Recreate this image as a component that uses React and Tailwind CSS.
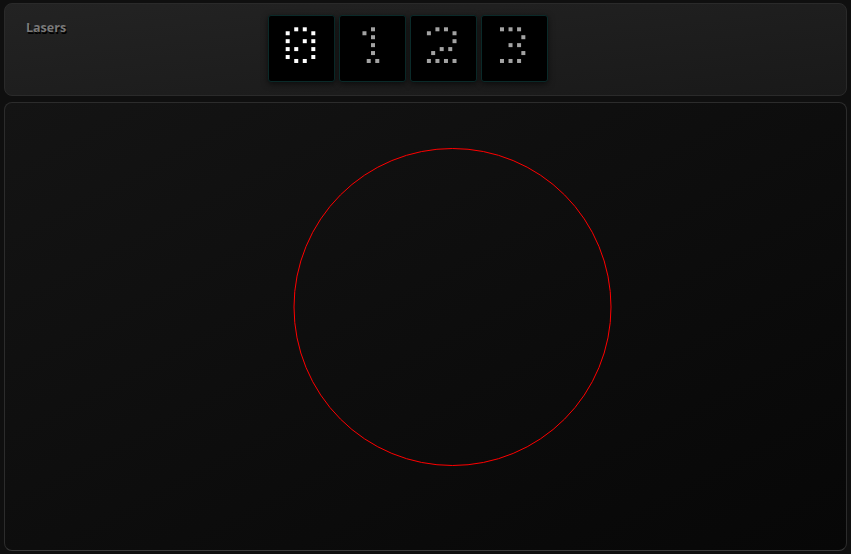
import React from 'react';

// dot-matrix glyphs: [col offset in half-steps, row in half-steps]
const GLYPHS = {
    0: [[-1, 0], [1, 0], [-3, 1], [3, 1], [-3, 3], [1, 3], [3, 3], [-3, 5], [-1, 5], [3, 5], [-3, 7], [3, 7], [-1, 8], [1, 8]],
    1: [[0, 0], [-2, 1], [0, 2], [0, 4], [0, 6], [-1, 8], [1, 8]],
    2: [[-1, 0], [1, 0], [-3, 1], [3, 1], [3, 3], [0, 5], [2, 5], [-2, 6], [-3, 8], [-1, 8], [1, 8], [3, 8]],
    3: [[-3, 0], [-1, 0], [1, 0], [2, 2], [-1, 4], [1, 4], [2, 6], [-3, 8], [-1, 8], [1, 8]],
};

const CENTERS = [32.5, 34, 31.7, 33.8];

const DigitTile = ({ digit, active }) => {
    const cx = CENTERS[digit];
    return (
        <div className="w-[67px] h-[67px] rounded-[3px] bg-black border border-[#0a2a29] shadow-[0_2px_6px_rgba(0,0,0,0.6)]">
            <svg width="65" height="65" viewBox="0 0 65 65">
                {GLYPHS[digit].map(([c, r], i) => (
                    <rect
                        key={i}
                        x={cx - 1 + c * 4.27 - 2}
                        y={13.3 + r * 3.96 - 2}
                        width="4"
                        height="4"
                        fill={active ? '#ffffff' : '#a3a3a3'}
                    />
                ))}
            </svg>
        </div>
    );
}

export default function App() {
    return (
        <div
            className="w-[851px] h-[554px] bg-[#0f0f0f] px-[4px] pt-[3px] pb-[3px] flex flex-col gap-[6px] overflow-hidden"
            style={{ fontFamily: '"Open Sans", "DejaVu Sans", sans-serif' }}
        >
            {/* Header */}
            <div className="h-[93px] shrink-0 rounded-[8px] border border-[#2a2a2a] bg-gradient-to-br from-[#232323] to-[#191919] flex items-start">
                <div className="w-[263px] pl-[21px] pt-[10px]">
                    <span className="text-[12.5px] font-bold text-[#7a7a7a] [text-shadow:1px_2px_0_#000]">Lasers</span>
                </div>
                <div className="flex gap-[4px] mt-[11px]">
                    {[0, 1, 2, 3].map((d) => (
                        <DigitTile key={d} digit={d} active={d === 0} />
                    ))}
                </div>
            </div>

            {/* Laser canvas */}
            <div className="flex-1 rounded-[8px] border border-[#2c2c2c] border-b-[#3a3a3a] bg-gradient-to-br from-[#141414] to-[#070707] overflow-hidden">
                <svg width="841" height="447" viewBox="0 0 841 447" className="block">
                    <circle cx="447.5" cy="204" r="158.5" fill="none" stroke="#ff0000" strokeWidth="1" />
                </svg>
            </div>
        </div>
    );
}
